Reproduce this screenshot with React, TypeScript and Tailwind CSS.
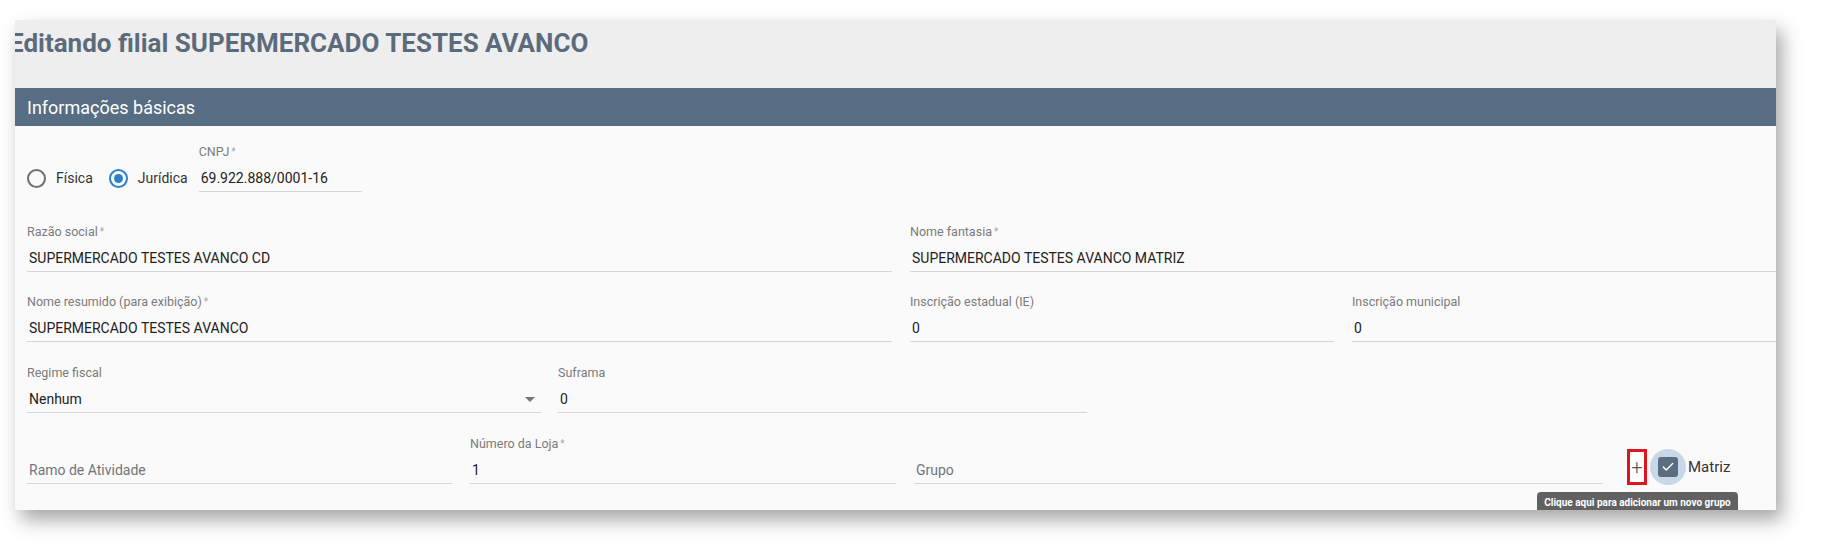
import { Check } from 'lucide-react'

type FieldProps = {
  label?: string
  value?: string
  placeholder?: string
  required?: boolean
  select?: boolean
  className?: string
}

function Field({ label, value, placeholder, required, select, className }: FieldProps) {
  return (
    <div className={className}>
      <div className="h-[18px] text-[12.5px] leading-[18px] text-[#7b7b7b]">
        {label}
        {label && required && <span className="ml-[2px] text-[#a8a8a8] text-[10px] align-top">*</span>}
      </div>
      <div className="h-[31px] flex items-center border-b border-[#d6d6d6] pl-[2px] pr-[6px] pt-[5px]">
        {value ? (
          <span className="text-[14px] text-[#222222] flex-1">{value}</span>
        ) : (
          <span className="text-[14px] text-[#70757a] flex-1">{placeholder}</span>
        )}
        {select && (
          <svg width="10" height="6" viewBox="0 0 10 6">
            <path d="M0 0 L10 0 L5 5 Z" fill="#777777" />
          </svg>
        )}
      </div>
    </div>
  )
}

function Radio({ checked, label }: { checked?: boolean; label: string }) {
  return (
    <label className="flex items-center gap-[10px]">
      <span
        className={
          checked
            ? 'w-[19px] h-[19px] rounded-full border-2 border-[#2f7fc7] flex items-center justify-center'
            : 'w-[19px] h-[19px] rounded-full border-2 border-[#6f6f6f]'
        }
      >
        {checked && <span className="w-[9px] h-[9px] rounded-full bg-[#2f7fc7]" />}
      </span>
      <span className="text-[14px] text-[#333333]">{label}</span>
    </label>
  )
}

export default function App() {
  return (
    <div className="min-h-[559px] bg-white overflow-hidden" style={{ fontFamily: 'Roboto, "Noto Sans", sans-serif' }}>
      <div className="relative ml-[15px] mt-[20px] w-[1761px] h-[490px] overflow-hidden bg-[#fafafa] shadow-[6px_10px_18px_rgba(0,0,0,0.35)]">
        <div className="h-[68px] bg-[#eeeeee] pt-[7px] overflow-hidden">
          <h1 className="-ml-[6px] text-[26px] leading-[32px] font-bold text-[#5b6b7c] whitespace-nowrap">
            Editando filial SUPERMERCADO TESTES AVANCO
          </h1>
        </div>
        <div className="h-[38px] bg-[#566d84] flex items-center pl-[12px] text-[18px] text-white">
          Informações básicas
        </div>

        <div className="pl-[12px] pt-[17px]">
          <div className="flex items-end gap-[11px]">
            <div className="h-[30px] flex items-center gap-[16px] mb-[-1px]">
              <Radio label="Física" />
              <Radio checked label="Jurídica" />
            </div>
            <Field label="CNPJ" required value="69.922.888/0001-16" className="w-[163px]" />
          </div>

          <div className="flex gap-[18px] mt-[31px]">
            <Field label="Razão social" required value="SUPERMERCADO TESTES AVANCO CD" className="w-[869px]" />
            <Field label="Nome fantasia" required value="SUPERMERCADO TESTES AVANCO MATRIZ" className="w-[870px]" />
          </div>

          <div className="flex gap-[18px] mt-[21px]">
            <Field label="Nome resumido (para exibição)" required value="SUPERMERCADO TESTES AVANCO" className="w-[869px]" />
            <Field label="Inscrição estadual (IE)" value="0" className="w-[426px]" />
            <Field label="Inscrição municipal" value="0" className="w-[426px]" />
          </div>

          <div className="flex gap-[17px] mt-[22px]">
            <Field label="Regime fiscal" value="Nenhum" select className="w-[514px]" />
            <Field label="Suframa" value="0" className="w-[529px]" />
          </div>

          <div className="flex items-end gap-[18px] mt-[22px]">
            <Field placeholder="Ramo de Atividade" className="w-[425px]" />
            <Field label="Número da Loja" required value="1" className="w-[426px]" />
            <Field placeholder="Grupo" className="w-[689px]" />
            <div className="flex items-center ml-[6px] mb-[-1px]">
              <div className="w-[20px] h-[36px] border-[3px] border-[#e0141e] bg-white flex items-center justify-center text-[20px] font-light text-[#555555] leading-none">
                +
              </div>
              <div className="ml-[3px] w-[36px] h-[36px] rounded-full bg-[#c9d8e8] flex items-center justify-center">
                <span className="w-[20px] h-[20px] rounded-[3px] bg-[#5a6d81] flex items-center justify-center">
                  <Check size={14} strokeWidth={2.5} className="text-white" />
                </span>
              </div>
              <span className="ml-[2px] text-[15px] text-[#333333]">Matriz</span>
            </div>
          </div>
        </div>

        <div className="absolute left-[1522px] top-[472px] w-[201px] h-[26px] rounded-[4px] bg-[#616161] flex items-start pt-[5px] justify-center text-[10px] leading-[12px] font-bold text-white whitespace-nowrap">
          Clique aqui para adicionar um novo grupo
        </div>
      </div>
    </div>
  )
}
